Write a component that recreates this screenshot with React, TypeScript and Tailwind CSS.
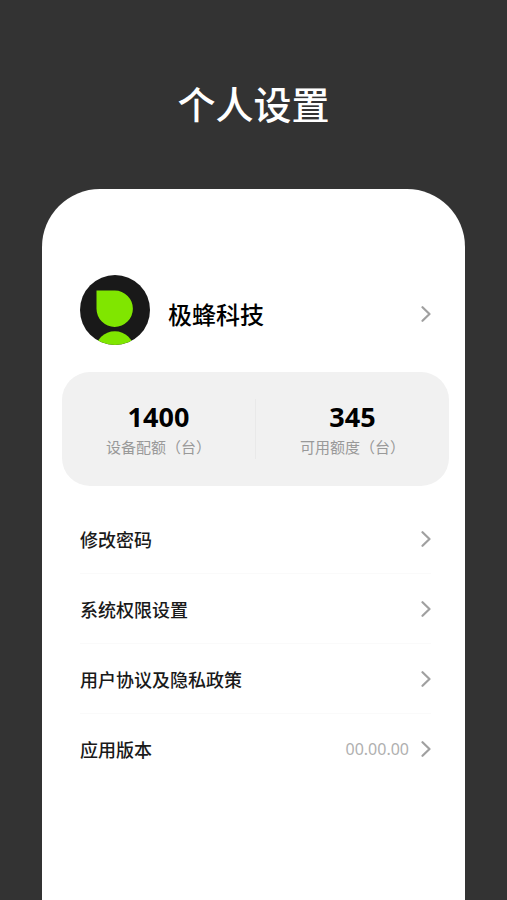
import React from "react";

const stats = [
  { value: "1400", label: "设备配额（台）" },
  { value: "345", label: "可用额度（台）" },
];

const menu = [
  { label: "修改密码" },
  { label: "系统权限设置" },
  { label: "用户协议及隐私政策" },
  { label: "应用版本", extra: "00.00.00" },
];

function Chevron() {
  return (
    <svg
      viewBox="0 0 10 18"
      className="w-[10px] h-[18px] shrink-0 text-[#a0a0a0]"
      fill="none"
      stroke="currentColor"
      strokeWidth="2.2"
      strokeLinecap="round"
      strokeLinejoin="round"
      aria-hidden="true"
    >
      <path d="M1.5 2.2 L8.5 9 L1.5 15.8" />
    </svg>
  );
}

function Avatar() {
  return (
    <svg viewBox="0 0 70 70" className="w-[70px] h-[70px] shrink-0" aria-hidden="true">
      <defs>
        <clipPath id="avatar-clip">
          <circle cx="35" cy="35" r="35" />
        </clipPath>
      </defs>
      <circle cx="35" cy="35" r="35" fill="#191919" />
      <g clipPath="url(#avatar-clip)" fill="#80e600">
        <path d="M16.5 15.5H34.8A18.2 18.2 0 1 1 16.5 33.7Z" />
        <circle cx="34.8" cy="75.5" r="19.3" />
      </g>
    </svg>
  );
}

export default function App() {
  return (
    <main className="flex min-h-screen flex-col bg-[#333333] font-['Noto_Sans','Noto_Sans_CJK_SC',sans-serif]">
      <h1 className="pt-20 text-center text-[38px] leading-[48px] font-medium text-white">
        个人设置
      </h1>

      <section className="mx-[42px] mt-[61px] flex-1 rounded-t-[58px] bg-white px-5 pt-[86px]">
        {/* Profile */}
        <button type="button" className="flex w-full items-center pr-[14px] pl-[18px] text-left">
          <Avatar />
          <span className="ml-[18px] flex-1 pt-[10px] text-2xl font-medium text-black">极蜂科技</span>
          <span className="pt-2">
            <Chevron />
          </span>
        </button>

        {/* Quota */}
        <div className="-mr-1 mt-[27px] flex items-center rounded-[28px] bg-[#f1f1f1] py-[27px]">
          {stats.map((item, i) => (
            <div
              key={item.label}
              className={`flex-1 text-center ${i > 0 ? "border-l border-[#e9e9e9]" : ""}`}
            >
              <div className="text-[27px] leading-9 font-bold text-black">{item.value}</div>
              <div className="text-[15px] leading-6 text-[#999999]">{item.label}</div>
            </div>
          ))}
        </div>

        {/* Menu */}
        <ul className="mt-[18px] pr-[14px] pl-[18px]">
          {menu.map((item, i) => (
            <li key={item.label} className={i > 0 ? "border-t border-[#fafafa]" : ""}>
              <button type="button" className="flex h-[69px] w-full items-center text-left">
                <span className="flex-1 pt-[2px] text-lg font-medium text-[#1a1a1a]">{item.label}</span>
                {item.extra && (
                  <span className="mr-3 text-base text-[#b0b0b0]">{item.extra}</span>
                )}
                <Chevron />
              </button>
            </li>
          ))}
        </ul>
      </section>
    </main>
  );
}
